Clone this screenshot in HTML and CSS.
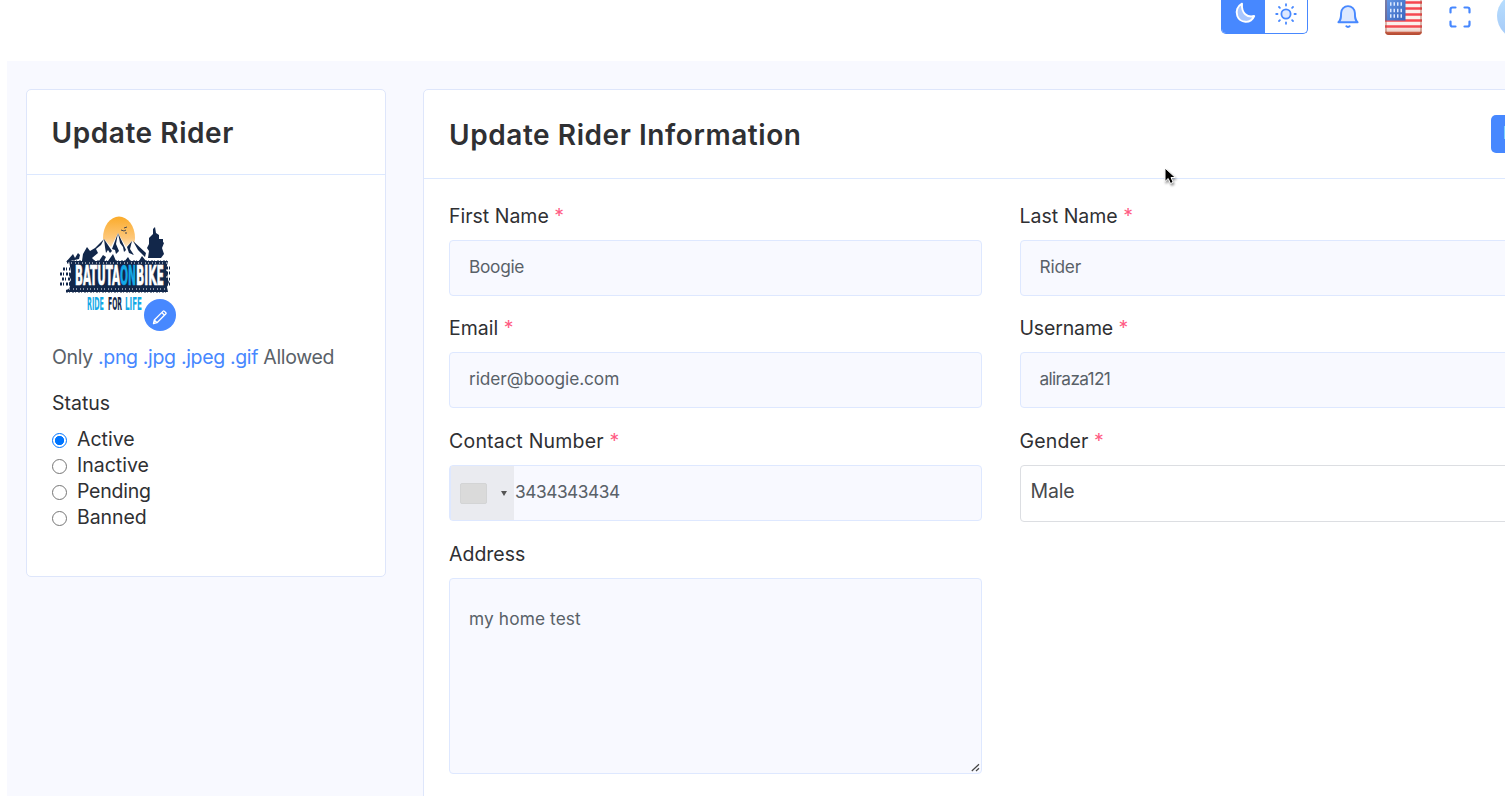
FILE: index.html
```html
<!DOCTYPE html>
<html lang="en">
<head>
<meta charset="utf-8">
<title>Update Rider</title>
<link rel="stylesheet" href="styles.css">
</head>
<body>
<header class="topbar">
  <div class="theme">
    <span class="theme-dark"><svg width="24" height="24" viewBox="0 0 24 24"><path d="M9 3.600C4.500 6 2.400 11.300 4.300 16C7 23 17.500 24.500 21.200 16C14.500 17.800 8.200 13.500 9 3.600Z" fill="#a9c7ff" stroke="#fff" stroke-width="1.900" stroke-linejoin="round"/></svg></span>
    <span class="theme-light"><svg width="22" height="22" viewBox="0 0 22 22" fill="none" stroke="#4788ff" stroke-width="1.800" stroke-linecap="round"><circle cx="11" cy="11" r="4.600" fill="#dde8ff"/><path d="M11 1.200v1.300M11 19.500v1.300M1.200 11h1.300M19.500 11h1.300M4 4l.9.9M17.100 17.100l.9.900M18 4l-.9.9M4.900 17.100l-.9.900"/></svg></span>
  </div>
  <svg class="bell" width="22" height="26" viewBox="0 0 22 26" fill="none" stroke="#4788ff" stroke-width="1.900" stroke-linecap="round" stroke-linejoin="round"><path d="M1.400 18.300C3.900 16 4.100 14 4.100 9a6.900 6.900 0 0 1 13.800 0c0 5 .2 7 2.700 9.300Z" fill="#dde8ff"/><path d="M9.300 22.200c.8 1 2.600 1 3.400 0"/></svg>
  <svg class="flag" width="37" height="38" viewBox="0 0 37 38">
    <defs>
      <clipPath id="flagShape"><rect width="37" height="38" rx="4"/></clipPath>
      <linearGradient id="gloss" x2="0" y2="1"><stop offset="0" stop-color="#fff" stop-opacity=".1"/><stop offset=".75" stop-color="#fff" stop-opacity=".12"/><stop offset="1" stop-color="#a03010" stop-opacity=".4"/></linearGradient>
      <linearGradient id="canton" x2="1" y2="1"><stop offset="0" stop-color="#5a93e8"/><stop offset="1" stop-color="#1c4fb4"/></linearGradient>
    </defs>
    <g clip-path="url(#flagShape)">
      <rect width="37" height="38" fill="#fbeeea"/>
      <path d="M20 5.500h17M20 11.500h17M20 17.500h17M0 23.500h37M0 29.500h37" stroke="#f5303a" stroke-width="2.400"/>
      <path d="M0 36.500h37" stroke="#d3583f" stroke-width="3.500"/>
      <rect width="20.500" height="23.500" fill="url(#canton)"/>
      <path d="M5 7h14M5 13.500h13M5 19h13" stroke="#d9e7ff" stroke-width="3.500" stroke-dasharray="1.500 2"/>
      <rect width="37" height="38" fill="url(#gloss)"/>
      <path d="M1 0v34q0 3 3 3h29q3 0 3-3V0" fill="none" stroke="#9f4d39" stroke-opacity=".45" stroke-width="1.600"/>
    </g>
  </svg>
  <svg class="expand" width="22" height="22" viewBox="0 0 22 22" fill="none" stroke="#4788ff" stroke-width="2.200" stroke-linecap="round" stroke-linejoin="round"><path d="M1.500 6.500v-3q0-2 2-2h3M15.500 1.500h3q2 0 2 2v3M20.500 15.500v3q0 2-2 2h-3M6.500 20.500h-3q-2 0-2-2v-3"/></svg>
  <span class="avatar"></span>
</header>
<main class="page">
  <section class="card profile">
    <div class="card-head"><h2 class="title t-rider">Update Rider</h2></div>
    <div class="profile-body">
      <div class="photo">
        <svg class="logo" width="120" height="104" viewBox="0 0 120 104">
          <defs><linearGradient id="sun" x2="0" y2="1"><stop offset="0" stop-color="#fbab29"/><stop offset=".5" stop-color="#fdc77a"/><stop offset=".8" stop-color="#fff4e4"/></linearGradient></defs>
          <ellipse cx="61" cy="22" rx="16" ry="21.500" fill="url(#sun)"/>
          <path d="M63 14l3 1 2-1M67 17l2 0M66 12l3-1" stroke="#14284b" stroke-width=".8" fill="none"/>
          <path d="M7 46L16 38 21 37 29 32 33 35 46 23 53 31 60 17 68 31 74 25 88 37 90 46Z" fill="#fff"/>
          <path d="M8 46L15 38 17 42 20 37 22 39 21 43ZM24 45L25 38 29 31 32 35 37 32 46 23 43 29 38 33 40 37 34 42 38 46ZM46 23L54 35 52 37 50 34 48 37 47 31ZM41 45l4-6 3 2-2 4ZM54 33L60 17 58 28 61 35 58 38 57 34ZM60 17L68 34 66 36 65 31 62 27ZM50 45l5-7 3 7ZM69 31L74 25 72 33 76 39 71 37ZM75 25L88 37 87 41 80 34ZM66 46l4-5 3 5ZM81 45l3-5 4 5Z" fill="#12274a"/>
          <path d="M97 11l1 6 3 2 0 4 4 0 0 3 1 1-2 5 2 6-3 4H90l1-7-2-3 2-4 0-6 4-4 0-5Z" fill="#12274a"/>
          <path d="M11 45H110l-2 9 2 3-1 5 2 4-2 5 1 5H8l4-5-1-4 2-3-2-5 2-3Z" fill="#12274a"/>
          <path d="M9 46H109M8 75H109M5 53H12M2 58H12M4 63H12M2 68H13M108 52H112M108 57H114M108 63H112M108 68H113" stroke="#12274a" stroke-width="3" stroke-dasharray="2 1 1 2"/>
          <path d="M10 47H109M8 73H109M7 60H12M108 61H114" stroke="#fff" stroke-width="1" stroke-dasharray="1 2 1 3"/>
          <g class="logo-text">
            <text class="logo-name" y="68.500"><tspan x="17" textLength="45" lengthAdjust="spacingAndGlyphs">BATUTA</tspan><tspan class="logo-on" x="62" textLength="16" lengthAdjust="spacingAndGlyphs">ON</tspan><tspan x="78" textLength="28" lengthAdjust="spacingAndGlyphs">BIKE</tspan></text>
            <text class="logo-tag" x="29" y="94" textLength="17" lengthAdjust="spacingAndGlyphs" fill="#14a9e7">RIDE</text>
            <text class="logo-tag" x="50" y="94" textLength="14" lengthAdjust="spacingAndGlyphs" fill="#12274a">FOR</text>
            <text class="logo-tag" x="67" y="94" textLength="17" lengthAdjust="spacingAndGlyphs" fill="#14a9e7">LIFE</text>
          </g>
        </svg>
        <span class="edit"><svg width="16" height="16" viewBox="0 0 16 16" fill="none" stroke="#fff" stroke-width="1.300" stroke-linejoin="round"><path d="M1.500 14.500l.8-3.500L11.200 2.100q.5-.5 1 0l1.700 1.700q.5.500 0 1L5 13.700ZM9.800 3.500l2.700 2.700M2.300 11l2.700 2.700"/></svg></span>
      </div>
      <p class="allowed">Only <a>.png</a> <a>.jpg</a> <a>.jpeg</a> <a>.gif</a> Allowed</p>
      <p class="status">Status</p>
      <label class="option"><span class="radio checked"></span><span>Active</span></label>
      <label class="option"><span class="radio"></span><span>Inactive</span></label>
      <label class="option"><span class="radio"></span><span class="o-pending">Pending</span></label>
      <label class="option"><span class="radio"></span><span class="o-banned">Banned</span></label>
    </div>
  </section>
  <section class="card info">
    <div class="card-head info-head"><h2 class="title t-info">Update Rider Information</h2><span class="back">Back</span></div>
    <div class="form">
      <div class="group"><label>First Name <i>*</i></label><div class="field"><span class="v-first">Boogie</span></div></div>
      <div class="group"><label>Last Name <i>*</i></label><div class="field"><span class="v-last">Rider</span></div></div>
      <div class="group"><label>Email <i>*</i></label><div class="field"><span class="v-email">rider@boogie.com</span></div></div>
      <div class="group"><label><span class="l-user">Username</span> <i>*</i></label><div class="field"><span class="v-user">aliraza121</span></div></div>
      <div class="group"><label><span class="l-contact">Contact Number</span> <i>*</i></label><div class="field phone"><div class="country"><b></b><svg width="6" height="5" viewBox="0 0 6 5"><path d="M0 0h6L3 5Z" fill="#555"/></svg></div><span class="v-phone">3434343434</span></div></div>
      <div class="group"><label><span class="l-gender">Gender</span> <i>*</i></label><div class="field select"><span class="v-gender">Male</span></div></div>
      <div class="group"><label>Address</label><div class="field area"><span class="v-address">my home test</span><svg class="grip" width="9" height="9" viewBox="0 0 9 9"><path d="M.8 8L8 1.200M5 8L8 5.200" stroke="#444" stroke-width="1.200"/></svg></div></div>
    </div>
  </section>
</main>
<svg class="cursor" width="18" height="24" viewBox="0 0 18 24"><path d="M2 2v13.500l3.200-3 2.300 5 2.700-1.200-2.200-4.800h4.300Z" fill="#000" stroke="#fff" stroke-width="1"/></svg>
</body>
</html>
```
FILE: styles.css
```css
* { box-sizing: border-box; }
body { margin: 0; width: 1505px; height: 796px; overflow: hidden; background: #fff; color: #2f3033; font-family: Inter, "Open Sans", sans-serif; font-size: 19.500px; }
h2, p { margin: 0; }
.topbar { height: 61px; padding-left: 1221px; display: flex; align-items: flex-start; width: 1505px; overflow: hidden; }
.topbar > * { flex: none; }
.theme { width: 87px; height: 34px; border: 1px solid #4788ff; border-top: 0; border-radius: 0 0 5px 5px; display: flex; overflow: hidden; }
.theme-dark { width: 43px; background: #4788ff; padding-left: 11px; }
.theme-light { padding: 2.500px 0 0 9.500px; }
.theme svg { display: block; }
.bell { margin: 4px 0 0 28.500px; }
.flag { margin: -3px 0 0 26.500px; }
.expand { margin: 5.500px 0 0 26.500px; }
.avatar { width: 46px; height: 46px; margin: -7px 0 0 26.500px; border-radius: 50%; background: linear-gradient(#b9e0ff, #a5c9f7); }
.page { margin-left: 7px; height: 735px; width: 1498px; overflow: hidden; padding: 28px 0 0 19px; display: flex; align-items: flex-start; gap: 37px; background: #f8f9ff; }
.card { flex: none; background: #fff; border: 1px solid #dee6fb; border-radius: 5px; }
.profile { width: 360px; height: 488px; }
.card-head { height: 85px; border-bottom: 1px solid #dce8ff; padding: 0 25px; display: flex; align-items: center; }
.title { font-size: 28px; line-height: 36px; font-weight: 600; white-space: nowrap; letter-spacing: .570px; }
.t-rider { padding-top: 1px; margin-left: -.5px; }
.profile-body { padding: 32px 25px 0; }
.photo { width: 126px; height: 132px; padding: 9px 0 0 6px; position: relative; }
.logo { display: block; }
.logo-text { font-family: "DejaVu Sans Condensed", "DejaVu Sans", sans-serif; font-weight: 700; }
.logo-name { font-size: 26px; fill: #fff; stroke: #fff; stroke-width: .7; }
.logo-on { fill: #14a9e7; stroke: #14a9e7; }
.logo-tag { font-size: 17px; }
.edit { position: absolute; left: 92px; top: 92px; width: 32px; height: 32px; border-radius: 50%; background: #4788ff; display: flex; align-items: center; justify-content: center; padding-top: 3px; }
.allowed { line-height: 26px; margin-top: 5px; color: #596168; white-space: nowrap; letter-spacing: -.340px; }
.allowed a { color: #4788ff; }
.status { line-height: 26px; margin: 20px 0 10px; }
.option { display: flex; align-items: center; height: 26px; line-height: 26px; gap: 10px; }
.o-pending { letter-spacing: -.250px; }
.o-banned { letter-spacing: -.080px; }
.radio { width: 15px; height: 15px; border: 1px solid #767676; border-radius: 50%; margin-top: 3px; }
.radio.checked { border: 1.500px solid #0075ff; background: radial-gradient(circle, #0075ff 4.300px, #fff 5px); }
.info { width: 1180px; height: 760px; }
.info-head { height: 89px; }
.back { position: relative; width: 80px; height: 38px; line-height: 36px; padding-left: 12px; border-radius: 5px; background: #4788ff; color: #fff; font-size: 17px; margin-top: -1px; }
.t-info { width: 1042px; flex: none; padding-top: 1px; }
.form { padding: 23.700px 25px 0; display: grid; grid-template-columns: 533px 533px; grid-auto-rows: 112.700px; column-gap: 37.500px; }
.group label { display: block; height: 26px; line-height: 26px; white-space: nowrap; }
.group i { font-style: normal; color: #ff5c84; }
.field { margin-top: 11px; height: 56px; border: 1px solid #dee8ff; border-radius: 4px; background: #f8f9ff; color: #596168; padding-left: 19px; font-size: 17.300px; display: flex; align-items: center; line-height: 24px; padding-bottom: 2px; }
.phone { padding: 0; }
.country { width: 64px; height: 54px; background: #eaebf0; border-left: 1px solid #dee8ff; display: flex; align-items: center; margin-right: 1px; }
.country b { width: 27px; height: 21px; margin: 0 14px 0 9px; background: #dadada; border: 1px solid #d3d4d5; border-radius: 2px; }
.select { height: 57px; background: #fff; border-color: #dcdee2; color: #47494d; font-size: 19.500px; padding: 0 0 6px 10px; }
.area { height: 196px; align-items: flex-start; padding-top: 28px; position: relative; }
.grip { position: absolute; right: 1px; bottom: 1px; }
.v-first { letter-spacing: -.300px; }
.v-last { letter-spacing: -.200px; }
.v-email { letter-spacing: -.070px; }
.v-user { letter-spacing: -.680px; }
.v-phone { letter-spacing: -.450px; padding-bottom: 2px; }
.v-address { letter-spacing: .120px; }
.v-gender { letter-spacing: -.200px; }
.l-user { letter-spacing: -.150px; }
.l-contact { letter-spacing: .220px; }
.l-gender { letter-spacing: .150px; }
.cursor { position: absolute; left: 1163px; top: 166px; filter: drop-shadow(1px 2px 1px rgba(0,0,0,.4)); }
```
